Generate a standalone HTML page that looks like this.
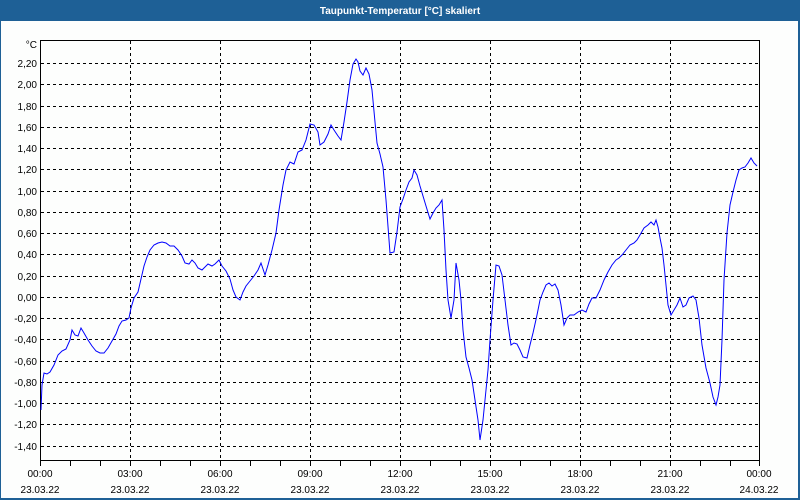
<!DOCTYPE html>
<html><head><meta charset="utf-8"><style>
html,body{margin:0;padding:0;width:800px;height:500px;overflow:hidden;background:#fdfefd}
</style></head><body>
<svg width="800" height="500" xmlns="http://www.w3.org/2000/svg" style="display:block;font-family:'Liberation Sans',sans-serif">
<rect x="0" y="0" width="800" height="500" fill="#fdfefd"/>
<rect x="0" y="0" width="800" height="21" fill="#1e6096"/>
<rect x="0" y="0" width="1" height="500" fill="#1e6096"/>
<rect x="798" y="0" width="2" height="500" fill="#1e6096"/>
<rect x="0" y="498" width="800" height="2" fill="#1e6096"/>
<text x="400" y="14" fill="#fff" font-size="10" font-weight="bold" text-anchor="middle">Taupunkt-Temperatur [°C] skaliert</text>
<g stroke="#000" stroke-width="1" stroke-dasharray="3,3" fill="none">
<path d="M130.5 41V460M220.5 41V460M310.5 41V460M400.5 41V460M490.5 41V460M580.5 41V460M670.5 41V460"/>
<path d="M41 63.5H760M41 84.5H760M41 106.5H760M41 127.5H760M41 148.5H760M41 169.5H760M41 191.5H760M41 212.5H760M41 233.5H760M41 254.5H760M41 276.5H760M41 297.5H760M41 318.5H760M41 339.5H760M41 361.5H760M41 382.5H760M41 403.5H760M41 424.5H760M41 446.5H760"/>
</g>
<rect x="40.5" y="40.5" width="719" height="420" fill="none" stroke="#000"/>
<g stroke="#000"><path d="M70.5 460V466M100.5 460V466M160.5 460V466M190.5 460V466M250.5 460V466M280.5 460V466M340.5 460V466M370.5 460V466M430.5 460V466M460.5 460V466M520.5 460V466M550.5 460V466M610.5 460V466M640.5 460V466M700.5 460V466M730.5 460V466M40.5 460V466M130.5 460V466M220.5 460V466M310.5 460V466M400.5 460V466M490.5 460V466M580.5 460V466M670.5 460V466M759.5 460V466"/></g>
<g font-size="10" fill="#000" text-anchor="end">
<text x="37" y="48">°C</text>
<text x="37" y="67">2,20</text><text x="37" y="88">2,00</text><text x="37" y="110">1,80</text><text x="37" y="131">1,60</text><text x="37" y="152">1,40</text><text x="37" y="173">1,20</text><text x="37" y="195">1,00</text><text x="37" y="216">0,80</text><text x="37" y="237">0,60</text><text x="37" y="258">0,40</text><text x="37" y="280">0,20</text><text x="37" y="301">0,00</text><text x="37" y="322">-0,20</text><text x="37" y="343">-0,40</text><text x="37" y="365">-0,60</text><text x="37" y="386">-0,80</text><text x="37" y="407">-1,00</text><text x="37" y="428">-1,20</text><text x="37" y="450">-1,40</text>
</g>
<g font-size="10" fill="#000" text-anchor="middle">
<text x="40" y="477">00:00</text><text x="130" y="477">03:00</text><text x="220" y="477">06:00</text><text x="310" y="477">09:00</text><text x="400" y="477">12:00</text><text x="490" y="477">15:00</text><text x="580" y="477">18:00</text><text x="670" y="477">21:00</text><text x="759" y="477">00:00</text>
<text x="40" y="493">23.03.22</text><text x="130" y="493">23.03.22</text><text x="220" y="493">23.03.22</text><text x="310" y="493">23.03.22</text><text x="400" y="493">23.03.22</text><text x="490" y="493">23.03.22</text><text x="580" y="493">23.03.22</text><text x="670" y="493">23.03.22</text><text x="759" y="493">24.03.22</text>
</g>
<polyline fill="none" stroke="#0000ff" stroke-width="1" points="41,410 42,385 44,373 47,374 50,372 54,365 58,355 62,351 66,349 70,340 72,330 75,335 78,336 81,328 84,333 88,340 92,346 96,351 100,353 104,353 108,348 112,341 116,334 119,326 122,321 126,320 129,318 131,308 134,298 138,292 141,279 144,266 147,257 150,250 154,245 158,243 162,242 166,243 170,246 174,246 178,250 182,256 185,263 189,264 192,260 195,263 198,268 202,270 205,267 208,264 212,266 215,264 219,260 222,266 226,271 230,279 233,290 236,297 240,300 243,292 246,286 250,281 254,276 258,270 261,263 265,275 268,265 272,250 276,233 279,210 283,185 286,170 290,162 294,164 298,152 302,150 306,140 310,124 314,125 318,132 320,145 324,142 328,134 331,125 334,130 338,136 341,140 344,122 347,102 350,80 353,64 356,59 358,62 360,71 363,75 366,68 369,74 372,90 375,122 377,143 380,154 383,167 386,200 390,253 394,252 397,232 400,207 403,199 406,190 409,182 412,178 414,170 417,175 420,186 423,196 426,206 430,219 433,213 436,208 439,205 442,200 444,230 446,270 448,300 451,318 454,300 456,263 459,280 461,300 463,330 466,357 469,368 472,380 475,400 478,420 480,440 483,420 486,390 488,370 490,340 493,300 496,265 499,266 502,275 505,300 508,325 511,345 514,343 517,344 520,350 523,357 527,358 530,345 533,333 537,315 540,300 543,292 546,285 549,283 552,286 555,284 558,290 561,305 564,325 567,318 570,315 574,315 578,312 582,310 586,312 589,304 592,298 596,298 600,290 604,280 608,272 612,265 616,260 619,258 622,255 626,250 630,245 634,243 637,240 640,235 644,228 648,225 651,222 654,225 656,220 658,227 660,238 662,248 664,265 666,285 668,305 671,315 674,310 677,305 680,298 683,307 686,305 689,298 693,296 696,300 699,318 702,345 706,368 710,383 713,397 716,405 718,397 720,385 722,340 724,280 727,233 730,205 733,192 736,180 739,170 742,168 745,167 748,163 751,158 754,163 757,166"/>
</svg>
</body></html>
